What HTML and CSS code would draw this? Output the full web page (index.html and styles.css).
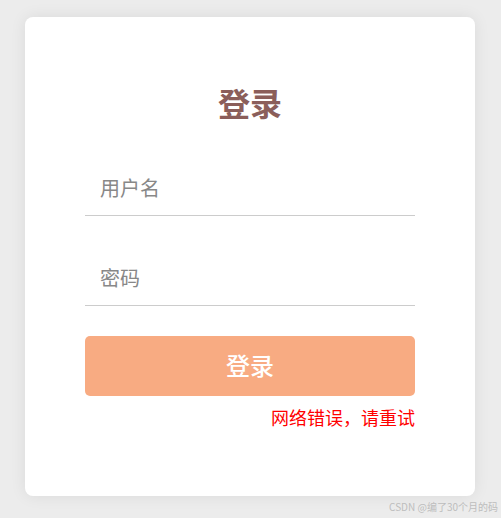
FILE: index.html
```html
<!DOCTYPE html>
<html lang="zh-CN">
<head>
<meta charset="utf-8">
<title>登录</title>
<link rel="stylesheet" href="styles.css">
</head>
<body>
<div class="page">
  <form class="card">
    <h1 class="title">登录</h1>
    <input class="field" type="text" placeholder="用户名">
    <input class="field field-pass" type="password" placeholder="密码">
    <button class="btn" type="button">登录</button>
    <p class="error">网络错误，请重试</p>
  </form>
</div>
<div class="watermark">CSDN @编了30个月的码</div>
</body>
</html>
```

FILE: styles.css
```css
html, body {
  margin: 0;
  padding: 0;
  height: 100%;
  background: #ececec;
  font-family: "Noto Sans CJK SC", "Noto Sans", sans-serif;
}
.page {
  display: flex;
  padding: 17px 0 0 25px;
}
.card {
  box-sizing: border-box;
  width: 450px;
  height: 479px;
  background: #fff;
  border-radius: 8px;
  box-shadow: 0 0 16px rgba(0, 0, 0, 0.08);
  padding: 0 60px;
  display: flex;
  flex-direction: column;
}
.title {
  margin: 63px 0 0;
  height: 44px;
  line-height: 44px;
  font-size: 32px;
  font-weight: 700;
  color: #8b5e5a;
  text-align: center;
}
.field {
  box-sizing: border-box;
  display: block;
  width: 100%;
  height: 50px;
  margin-top: 42px;
  padding: 0 15px 6px;
  border: none;
  border-bottom: 1px solid #cccccc;
  outline: none;
  font-family: inherit;
  font-size: 20px;
  color: #333;
  background: transparent;
}
.field-pass {
  margin-top: 40px;
}
.field::placeholder {
  color: #888;
}
.btn {
  margin-top: 30px;
  height: 60px;
  padding: 0 0 3px;
  border: none;
  border-radius: 5px;
  background: #f8ab82;
  color: #fff;
  font-family: inherit;
  font-size: 24px;
  font-weight: 500;
}
.error {
  margin: 8px 0 0;
  text-align: right;
  color: #ff0000;
  font-size: 18px;
  line-height: 26px;
}
.watermark {
  position: absolute;
  right: 3px;
  bottom: 4px;
  font-size: 10px;
  color: #bdbdbd;
}
```
